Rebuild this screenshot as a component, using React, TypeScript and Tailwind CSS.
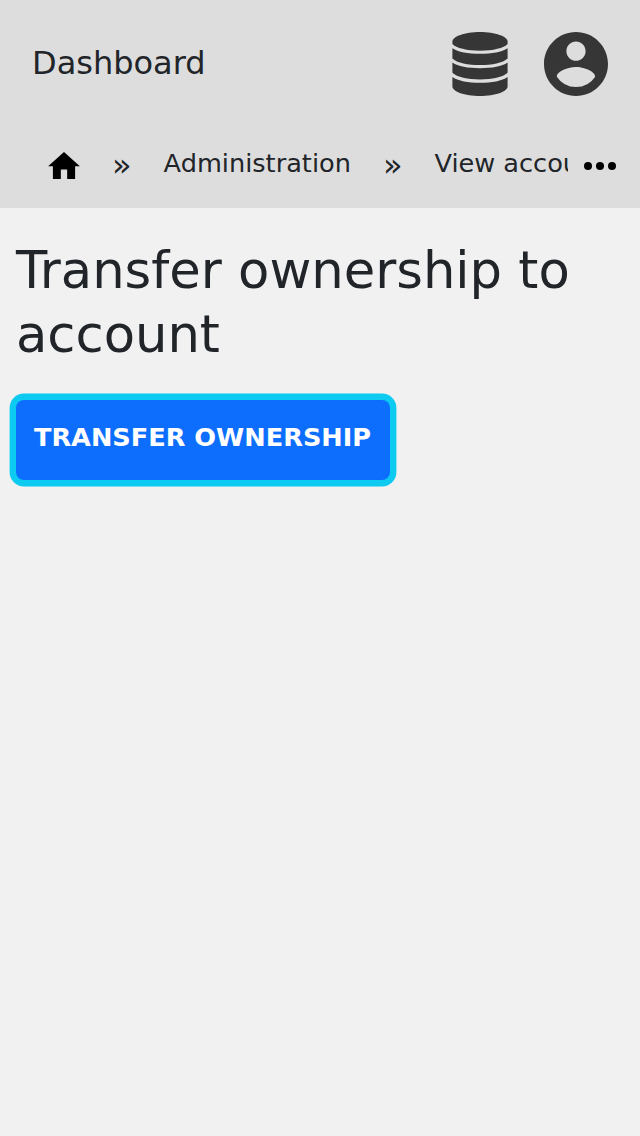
import React from "react";

function Separator() {
  return <span className="ml-8 mt-[18px] h-[39px] w-[19.600px] shrink-0 text-[32px]">»</span>;
}

export default function App() {
  return (
    <div className="min-h-[1136px] w-full bg-[#f1f1f1] font-['DejaVu_Sans',sans-serif] text-[#212529]">
      <header className="h-[208px] bg-[#dddddd]">
        <div className="flex h-32 items-center justify-between px-8">
          <span className="pb-0.5 text-[32px] leading-[48px]">Dashboard</span>
          <div className="flex items-center gap-9 text-[#363636]">
            <svg viewBox="0 0 56 64" className="h-16 w-14" fill="currentColor">
              <path d="M.4 9.500C.4 4.500 12.700 0 28 0s27.600 4.500 27.600 9.500v2.500C52 16 41 18.700 28 18.700S4 16 .4 12z" />
              <path d="M.4 16.200C6 20 16 21.800 28 21.800s22-1.800 27.600-5.600v10.300C51 31 40 33.100 28 33.100S5 31 .4 26.500z" />
              <path d="M.4 30.600C6 34.600 16 36.300 28 36.300s22-1.700 27.600-5.700v10.200C51 45.300 40 47.400 28 47.400S5 45.300 .4 40.800z" />
              <path d="M.4 44.900C6 48.900 16 50.800 28 50.800s22-1.900 27.600-5.900v9.600C55.600 59.500 43.300 64 28 64S.4 59.500 .4 54.500z" />
            </svg>
            <svg viewBox="2 2 20 20" className="size-16" fill="currentColor">
              <path d="M12 2C6.480 2 2 6.480 2 12s4.480 10 10 10 10-4.480 10-10S17.520 2 12 2zm0 3c1.660 0 3 1.340 3 3s-1.340 3-3 3-3-1.340-3-3 1.340-3 3-3zm0 14.200a7.200 7.200 0 0 1-6-3.220c.03-1.990 4-3.080 6-3.080 1.990 0 5.970 1.090 6 3.080a7.200 7.200 0 0 1-6 3.220z" />
            </svg>
          </div>
        </div>
        <nav className="flex h-20 pl-12 pr-6">
          <div className="flex w-[520px] overflow-hidden whitespace-nowrap text-[25.600px] leading-[39px]">
            <svg viewBox="2 3 20 17" className="mt-6 h-[27px] w-8 shrink-0 text-black" fill="currentColor">
              <path d="M10 20v-6h4v6h5v-8h3L12 3 2 12h3v8z" />
            </svg>
            <Separator />
            <span className="ml-8 mt-4">Administration</span>
            <Separator />
            <span className="ml-8 mt-4">View account</span>
          </div>
          <svg viewBox="0 0 32 8" className="ml-4 mt-[34px] h-2 w-8 shrink-0 text-black" fill="currentColor">
            <circle cx="4" cy="4" r="4" />
            <circle cx="16" cy="4" r="4" />
            <circle cx="28" cy="4" r="4" />
          </svg>
        </nav>
      </header>
      <main className="px-4 pt-[30px]">
        <h1 className="text-[51.200px] leading-16">Transfer ownership to account</h1>
        <button className="mt-[34px] h-20 w-[374px] rounded-lg bg-[#0d6efd] pb-1.5 pr-px text-[25.600px] font-bold uppercase text-white shadow-[0_0_0_6.400px_#0dcaf0]">
          Transfer ownership
        </button>
      </main>
    </div>
  );
}
